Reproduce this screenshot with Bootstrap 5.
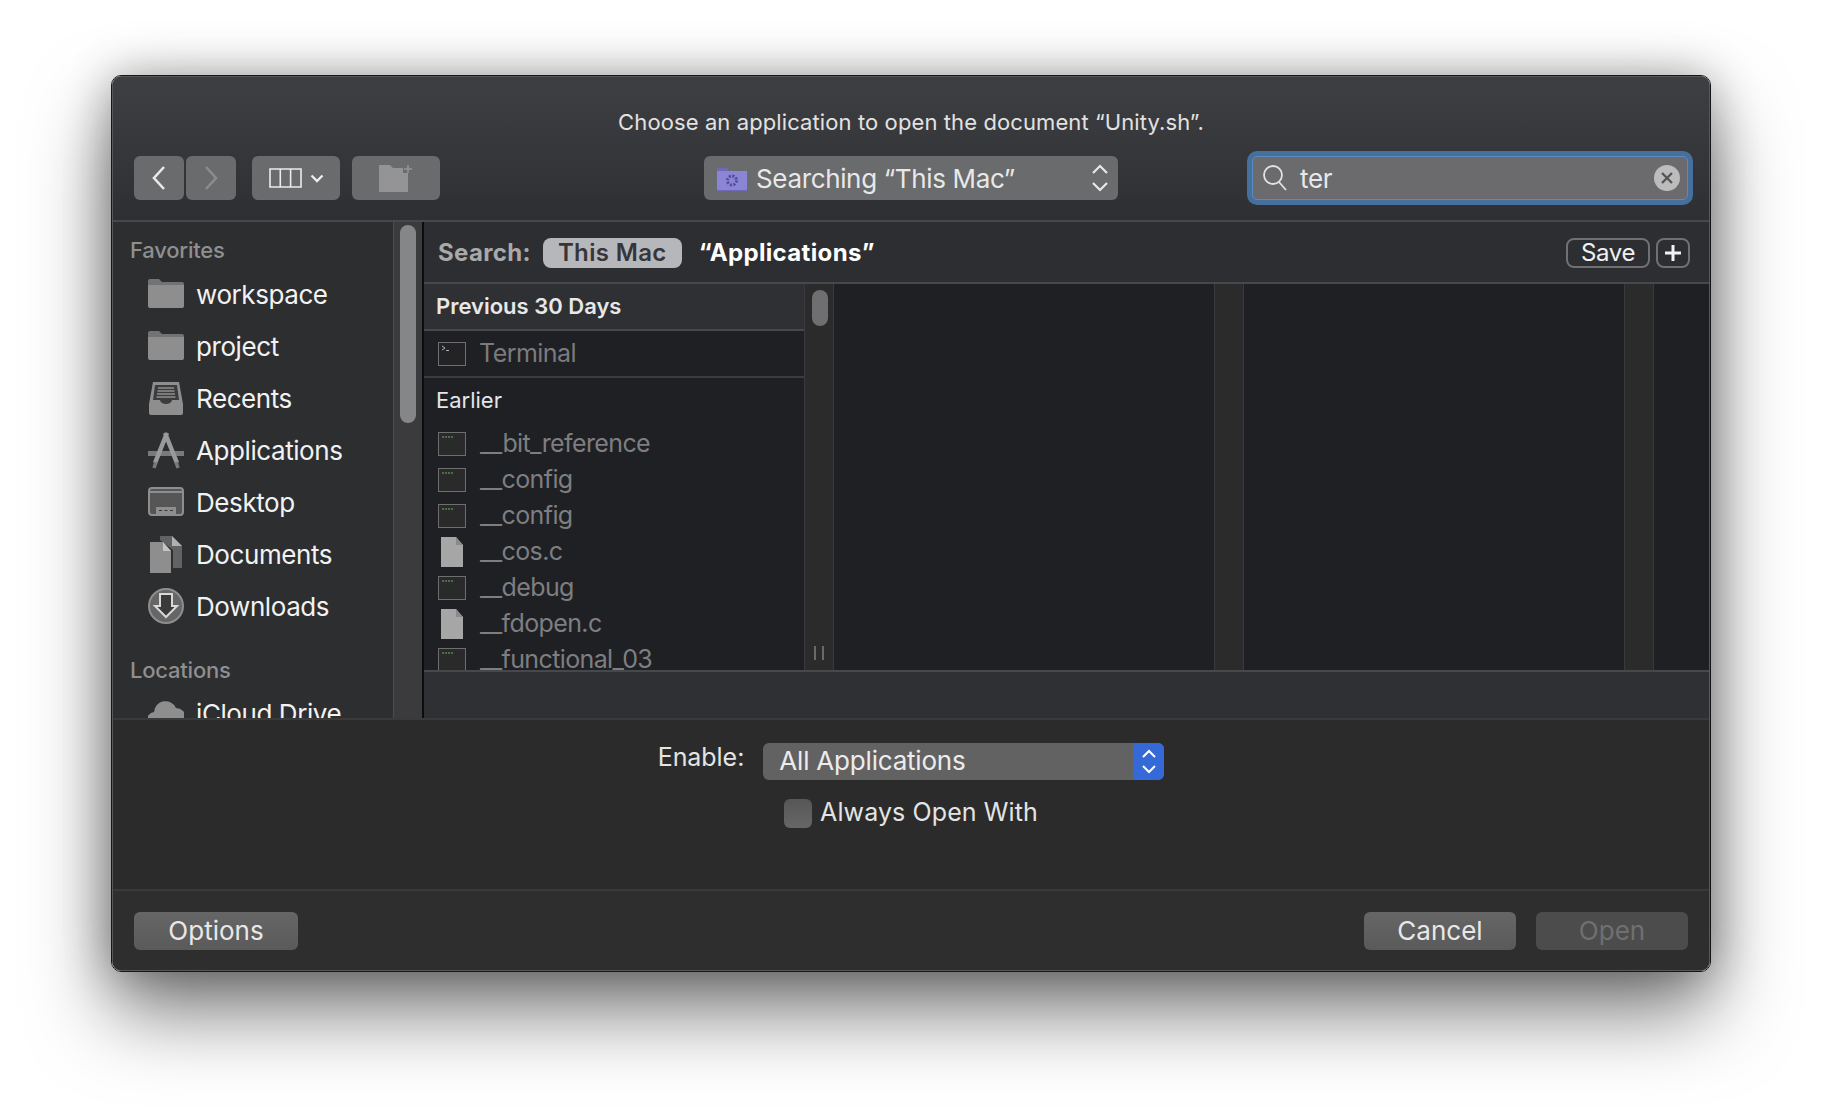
<!doctype html>
<html lang="en">
<head>
<meta charset="utf-8">
<title>Choose application</title>
<link href="https://cdn.jsdelivr.net/npm/bootstrap@5.3.0/dist/css/bootstrap.min.css" rel="stylesheet">
<style>
html,body{height:100%}
body{background:#fff;font-family:Inter,"Liberation Sans",sans-serif;overflow:hidden;padding-top:75px;letter-spacing:-.35px}
.win{width:1600px;height:897px;margin-left:111px;border:1px solid #161618;border-radius:10px;box-shadow:0 40px 80px rgba(0,0,0,.52),0 0 46px rgba(0,0,0,.3)}
.win-in{height:100%;border:1px solid #58585a;border-radius:9px;overflow:hidden;background:#2b2b2b}
.head{height:143px;background:linear-gradient(#3e3f42,#2e2f32);color:#e2e2e2}
.ttl{font-size:22px;line-height:26px;padding-top:32px;height:79px;letter-spacing:.1px}
.tbar{display:grid;grid-template-columns:1fr 414px 1fr;padding:0 21px;height:44px}
.tb{height:44px;background:#6a6b6d;border-radius:6px;border:0;padding:0;color:#ddd}
.tb-back,.tb-fwd{width:50px}
.tb-fwd{margin-left:2px}
.tb-view,.tb-new{width:88px}
.tb-view{margin-left:16px}
.tb-new{margin-left:12px}
.tb-pop{width:414px;color:#e8e8e8;font-size:26px;padding-left:13px;padding-right:9px;letter-spacing:-.35px}
.pop-ic{margin-right:9px}
.srch{width:436px;height:44px;margin-left:auto;background:#6b6b6d;border-radius:5px;border:1px solid #5a8bc0;box-shadow:0 0 0 5px #466f9e;color:#e8e8e8;font-size:26px;padding:0 7px 0 9px}
.clr{width:26px;height:26px;border-radius:50%;background:#bcbcbc}
.main{height:498px;border-top:2px solid #47484b}
.side{width:309px;background:#2d2e30}
.side-list{width:280px;overflow:hidden;padding-top:15px}
.sec{font-size:22px;line-height:26px;color:#8f8f8f;padding-left:17px;font-weight:500;letter-spacing:-.2px}
.sec-fav{margin-bottom:5px}
.sec-loc{margin-top:25px;margin-bottom:4px}
.sitem{height:52px;color:#f2f2f2;font-size:26px;padding-left:35px;gap:12px;flex-shrink:0;letter-spacing:-.42px}
.sico{width:36px;height:38px;flex-shrink:0;display:block}
.strack{width:29px;background:#3b3b3d;border-left:1px solid #4d4d4f;padding:3px 5px 0 6px}
.sthumb{width:16px;height:198px;border-radius:8px;background:#858688}
.vline{width:2px;background:#0c0c0c}
.rgt{width:0;flex:1 1 0}
.sbar{height:62px;background:#2d2e31;border-bottom:2px solid #47484b;padding:2px 19px 0 14px;font-size:24px;letter-spacing:.35px}
.sl{color:#a9a9a9;font-weight:700}
.pill{background:#b6b7bb;color:#36363a;font-weight:600;height:30px;line-height:30px;border-radius:8px;padding:0 15px;margin:0 17px 0 12px}
.qapp{color:#fff;font-weight:700}
.ghost{height:30px;border:2px solid #707072;border-radius:8px;color:#f0f0f0;background:none;padding:0;font-size:24px;line-height:24px;letter-spacing:-.35px}
.g-save{width:84px;margin-right:6px}
.g-plus{width:34px}
.cols{height:386px;background:#1f2024}
.col1{width:380px;overflow:hidden}
.colh{height:47px;background:#2f3034;border-bottom:2px solid #47484b;color:#e8e8e8;font-size:22px;font-weight:600;padding-left:12px;letter-spacing:0}
.trow{height:47px;border-bottom:2px solid #3b3c3e;padding-left:14px;color:#7b7b7d;font-size:25px;gap:13px;letter-spacing:-.55px}
.earl{height:44px;margin-bottom:4px;color:#e6e6e6;font-size:22px;padding-left:12px;letter-spacing:0}
.frow{height:36px;padding-left:14px;color:#7e7e80;font-size:25px;gap:14px;flex-shrink:0;letter-spacing:-.62px}
.fico{width:28px;height:24px;flex-shrink:0;display:block}
.dico{width:28px;height:30px;flex-shrink:0;display:block}
.track{width:30px;background:#2b2b2c;border-left:1px solid #3a3a3c;border-right:1px solid #3a3a3c;position:relative}
.thumb{width:16px;height:36px;border-radius:8px;background:#6f6f71;margin:6px 0 0 7px}
.grip{position:absolute;left:9px;bottom:10px;width:10px;height:14px;border-left:2px solid #6a6a6c;border-right:2px solid #6a6a6c}
.blank{width:380px}
.rest{flex:1 1 0}
.stat{height:48px;background:#2f3033;border-top:2px solid #47484b}
.lower{height:171px;border-top:2px solid #3a3a3b;background:#2b2b2b;color:#e4e4e4;font-size:25px;padding-top:23px}
.enbl{gap:19px;height:37px}
.en-lab{line-height:28px;align-self:flex-start;letter-spacing:-.05px}
.pop2{width:401px;height:37px;background:#626263;border-radius:6px;overflow:hidden;color:#ececec;padding-left:16px;font-size:26px;letter-spacing:-.2px}
.pop2-t{padding-bottom:2px}
.pop2-b{width:31px;height:100%;background:#3569d8;margin-left:auto}
.chk{gap:8px;margin-top:18px;height:30px;letter-spacing:.1px}
.ck{width:28px;height:29px;border-radius:6px;background:linear-gradient(#575758,#666667);flex-shrink:0}
.foot{height:81px;border-top:2px solid #3a3a3b;background:#2e2e2e;padding:21px 21px 0}
.fb{height:38px;border:0;border-radius:6px;background:linear-gradient(#666,#5a5a5a);color:#e8e8e8;font-size:26px;padding:0;line-height:38px}
.fb-opt{width:164px}
.fb-can{width:152px;margin-right:20px;margin-left:auto}
.fb-open{width:152px}
.fb:disabled{background:#4c4c4c;color:#707070;opacity:1}
</style>
</head>
<body>
<svg width="0" height="0" class="d-block position-absolute">
<defs>
<symbol id="i-folder" viewBox="0 0 36 38"><path d="M0 6a2 2 0 0 1 2-2h9l3 3h20a2 2 0 0 1 2 2v4H0z" fill="#737375"/><path d="M0 10h36v21a2 2 0 0 1-2 2H2a2 2 0 0 1-2-2z" fill="#8e8e8f"/></symbol>
<symbol id="i-term" viewBox="0 0 28 24"><rect x=".5" y=".5" width="27" height="23" fill="#2a2a2b" stroke="#6e6e70"/><path d="M4 5h2M7 5h2M10 5h2M13 5h2" stroke="#4d8b4d" stroke-width="1.5"/></symbol>
<symbol id="i-doc" viewBox="0 0 28 30"><path d="M3 0h15l7 8v22H3z" fill="#a6a6a7"/><path d="M18 0v8h7z" fill="#8a8a8b"/></symbol>
</defs>
</svg>
<div class="win">
<div class="win-in d-flex flex-column">
<header class="head">
<div class="ttl text-center">Choose an application to open the document “Unity.sh”.</div>
<div class="tbar">
<div class="d-flex">
<button class="tb tb-back d-flex align-items-center justify-content-center" type="button" aria-label="Back"><svg width="16" height="26" viewBox="0 0 16 26"><path d="M13 2 3 13l10 11" fill="none" stroke="#e8e8e8" stroke-width="2.6"/></svg></button>
<button class="tb tb-fwd d-flex align-items-center justify-content-center" type="button" aria-label="Forward"><svg width="16" height="26" viewBox="0 0 16 26"><path d="m3 2 10 11L3 24" fill="none" stroke="#8c8c8e" stroke-width="2.6"/></svg></button>
<button class="tb tb-view d-flex align-items-center justify-content-center gap-2" type="button" aria-label="View"><svg width="33" height="20" viewBox="0 0 33 20"><path d="M1 1h31v18H1zM11.3 1v18M21.600 1v18" fill="none" stroke="#ececec" stroke-width="1.600"/></svg><svg width="14" height="9" viewBox="0 0 14 9"><path d="m1.500 1.500 5.500 5.500 5.500-5.500" fill="none" stroke="#ececec" stroke-width="2.400"/></svg></button>
<button class="tb tb-new d-flex align-items-center justify-content-center" type="button" aria-label="New folder"><svg width="36" height="28" viewBox="0 0 36 28"><path d="M1 1h11l3 3h10v5h5v19H1z" fill="#949496"/><path d="M30 1v8M26 5h8" stroke="#949496" stroke-width="1.500"/></svg></button>
</div>
<button class="tb tb-pop d-flex align-items-center" type="button">
<svg width="30" height="25" viewBox="0 0 30 25" class="pop-ic flex-shrink-0"><path d="M0 2h10l2 3h18v20H0z" fill="#6f69b8"/><rect y="5" width="30" height="19" fill="#8a85d4"/><circle cx="15" cy="14.500" r="4.500" fill="none" stroke="#4e4a96" stroke-width="3" stroke-dasharray="2 1.500"/></svg>
<span>Searching “This Mac”</span>
<svg width="18" height="30" viewBox="0 0 18 30" class="ms-auto"><path d="m2 10 7-7 7 7M2 20l7 7 7-7" fill="none" stroke="#e8e8e8" stroke-width="2.200"/></svg>
</button>
<div class="srch d-flex align-items-center">
<svg width="26" height="28" viewBox="0 0 26 28" class="me-2 flex-shrink-0"><circle cx="11" cy="11" r="9" fill="none" stroke="#e2e2e2" stroke-width="1.800"/><path d="m17 18 7 8" stroke="#e2e2e2" stroke-width="1.800"/></svg>
<span class="ms-1">ter</span>
<span class="clr ms-auto d-flex align-items-center justify-content-center"><svg width="14" height="14" viewBox="0 0 14 14"><path d="m2 2 10 10M12 2 2 12" stroke="#555" stroke-width="2.400"/></svg></span>
</div>
</div>
</header>
<div class="main d-flex">
<aside class="side d-flex flex-shrink-0">
<div class="side-list d-flex flex-column">
<div class="sec sec-fav">Favorites</div>
<div class="sitem d-flex align-items-center"><svg class="sico"><use href="#i-folder"/></svg>workspace</div>
<div class="sitem d-flex align-items-center"><svg class="sico"><use href="#i-folder"/></svg>project</div>
<div class="sitem d-flex align-items-center"><svg class="sico" viewBox="0 0 36 38"><path d="M5 3h26l4 22v9a2 2 0 0 1-2 2H3a2 2 0 0 1-2-2v-9z" fill="#8e8e8f"/><path d="M7 6h22l2 15h-7a6 4 0 0 1-12 0H5z" fill="#3c3c3e"/><path d="M10 9h16M9.500 12h17M9 15h18M8.500 18h19" stroke="#8e8e8f" stroke-width="1.500"/></svg>Recents</div>
<div class="sitem d-flex align-items-center"><svg class="sico" viewBox="0 0 36 38"><path d="M0 20h36v5H0z" fill="#7a7a7b"/><path d="M19 2 7 32M17 2l12 30" stroke="#9a9a9b" stroke-width="4.500" fill="none"/><path d="m6 37 2-6M30 37l-2-6" stroke="#7a7a7b" stroke-width="3.500"/></svg>Applications</div>
<div class="sitem d-flex align-items-center"><svg class="sico" viewBox="0 0 36 38"><rect x="1" y="5" width="34" height="27" rx="3" fill="#565657" stroke="#8e8e8f" stroke-width="2"/><path d="M1 9h34" stroke="#8e8e8f" stroke-width="2"/><rect x="8" y="24" width="20" height="7" fill="#8e8e8f"/><path d="M11 27.500h3M16.500 27.500h3M22 27.500h3" stroke="#3a3a3b" stroke-width="1"/></svg>Desktop</div>
<div class="sitem d-flex align-items-center"><svg class="sico" viewBox="0 0 36 38"><path d="M12 1h12l10 10v22h-9V15L12 5z" fill="#626264"/><path d="M2 7h13l8 9v22H2z" fill="#8e8e8f"/><path d="M15 7v9h8z" fill="#c4c4c4"/><path d="M24 1v10h10z" fill="#b0b0b0"/></svg>Documents</div>
<div class="sitem d-flex align-items-center"><svg class="sico" viewBox="0 0 36 38"><circle cx="18" cy="19" r="17" fill="#666" stroke="#8e8e8f" stroke-width="2"/><path d="M12 7h12v12h5L18 30 7 19h5z" fill="#3a3a3b" stroke="#d8d8d8" stroke-width="2"/></svg>Downloads</div>
<div class="sec sec-loc">Locations</div>
<div class="sitem d-flex align-items-center"><svg class="sico" viewBox="0 0 36 38"><path d="M8 34a8 8 0 0 1-2-16 11.500 11.500 0 0 1 22-4 10 10 0 0 1 0 20z" fill="#8e8e8f"/></svg>iCloud Drive</div>
</div>
<div class="strack"><div class="sthumb"></div></div>
</aside>
<div class="vline flex-shrink-0"></div>
<div class="rgt d-flex flex-column">
<div class="sbar d-flex align-items-center">
<span class="sl">Search:</span><span class="pill">This Mac</span><span class="qapp">“Applications”</span>
<button type="button" class="ghost g-save ms-auto">Save</button><button type="button" class="ghost g-plus d-flex align-items-center justify-content-center" aria-label="Add"><svg width="16" height="16" viewBox="0 0 16 16"><path d="M8 0v16M0 8h16" stroke="#f2f2f2" stroke-width="3"/></svg></button>
</div>
<div class="cols d-flex">
<div class="col1 d-flex flex-column">
<div class="colh d-flex align-items-center flex-shrink-0">Previous 30 Days</div>
<div class="trow d-flex align-items-center flex-shrink-0"><svg class="fico" viewBox="0 0 28 24"><rect x=".5" y=".5" width="27" height="23" fill="#232325" stroke="#6e6e70"/><path d="m4 4 3 2-3 2M8 8.500h3" fill="none" stroke="#b0b0b0"/></svg>Terminal</div>
<div class="earl d-flex align-items-center flex-shrink-0">Earlier</div>
<div class="frow d-flex align-items-center"><svg class="fico"><use href="#i-term"/></svg>__bit_reference</div>
<div class="frow d-flex align-items-center"><svg class="fico"><use href="#i-term"/></svg>__config</div>
<div class="frow d-flex align-items-center"><svg class="fico"><use href="#i-term"/></svg>__config</div>
<div class="frow d-flex align-items-center"><svg class="dico"><use href="#i-doc"/></svg>__cos.c</div>
<div class="frow d-flex align-items-center"><svg class="fico"><use href="#i-term"/></svg>__debug</div>
<div class="frow d-flex align-items-center"><svg class="dico"><use href="#i-doc"/></svg>__fdopen.c</div>
<div class="frow d-flex align-items-center"><svg class="fico"><use href="#i-term"/></svg>__functional_03</div>
</div>
<div class="track flex-shrink-0"><div class="thumb"></div><div class="grip"></div></div>
<div class="blank flex-shrink-0"></div>
<div class="track flex-shrink-0"></div>
<div class="blank flex-shrink-0"></div>
<div class="track flex-shrink-0"></div>
<div class="rest"></div>
</div>
<div class="stat"></div>
</div>
</div>
<section class="lower flex-shrink-0">
<div class="enbl d-flex justify-content-center">
<span class="en-lab">Enable:</span>
<div class="pop2 d-flex align-items-center"><span class="pop2-t">All Applications</span><span class="pop2-b d-flex align-items-center justify-content-center"><svg width="16" height="27" viewBox="0 0 16 27"><path d="m2 9 6-6 6 6M2 18l6 6 6-6" fill="none" stroke="#fff" stroke-width="2"/></svg></span></div>
</div>
<div class="chk d-flex justify-content-center align-items-center"><span class="ck"></span><span>Always Open With</span></div>
</section>
<footer class="foot d-flex flex-shrink-0">
<button type="button" class="fb fb-opt">Options</button>
<button type="button" class="fb fb-can">Cancel</button>
<button type="button" class="fb fb-open" disabled>Open</button>
</footer>
</div>
</div>
<script src="https://cdn.jsdelivr.net/npm/bootstrap@5.3.0/dist/js/bootstrap.bundle.min.js"></script>
</body>
</html>
